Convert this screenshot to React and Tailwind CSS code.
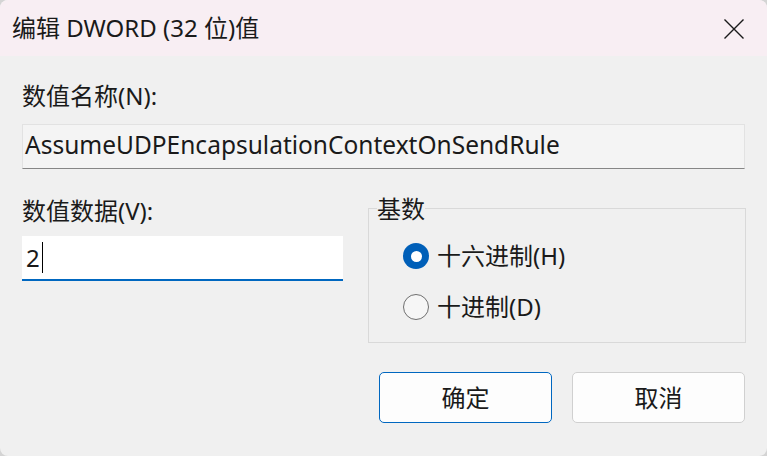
import React from 'react';

const font = { fontFamily: '"Noto Sans", "Noto Sans CJK SC", sans-serif' };

function Radio({ checked, label }) {
  return (
    <div className="flex items-center h-[34px]">
      {checked ? (
        <span className="w-[26px] h-[26px] rounded-full bg-[#005fb8] flex items-center justify-center">
          <span className="w-[11px] h-[11px] rounded-full bg-white" />
        </span>
      ) : (
        <span className="w-[26px] h-[26px] rounded-full border-[1.5px] border-[#6f6f6f] bg-[#f6f6f6]" />
      )}
      <span className="ml-[8px] text-[24px] text-[#1a1a1a]">{label}</span>
    </div>
  );
}

export default function App() {
  return (
    <div className="w-[767px] h-[456px] bg-[#d4d4d4]" style={font}>
      <div className="w-full h-full rounded-[8px] overflow-hidden bg-[#f0f0f0] flex flex-col">
        {/* Title bar */}
        <div className="h-[56px] shrink-0 bg-[#f8eef3] flex items-center justify-between pl-[12px] pr-[22px]">
          <span className="text-[24px] text-[#1a1a1a] leading-[32px]">编辑 DWORD (32 位)值</span>
          <svg width="22" height="22" viewBox="0 0 22 22" className="mt-[1px]">
            <path d="M1.5 1.5 L20.5 20.5 M20.5 1.5 L1.5 20.5" stroke="#1a1a1a" strokeWidth="1.4" fill="none" />
          </svg>
        </div>

        {/* Body */}
        <div className="flex-1 px-[22px] pt-[24px] text-[#1a1a1a]">
          <div className="text-[24px] leading-[32px]">数值名称(N):</div>
          <div className="mt-[12px] h-[45px] bg-[#f4f4f4] border border-[#e2e2e2] border-b-[#868686] flex items-center pl-[2px] pb-[4px]">
            <span className="text-[24.5px] leading-[32px]">AssumeUDPEncapsulationContextOnSendRule</span>
          </div>

          <div className="mt-[26px] grid grid-cols-[321px_378px] gap-x-[25px]">
            <div>
              <div className="text-[24px] leading-[32px]">数值数据(V):</div>
              <div className="mt-[9px] h-[45px] bg-white border-b-2 border-[#0067c0] flex items-center pl-[4px]">
                <span className="text-[24px] leading-[32px]">2</span>
                <span className="ml-[2px] w-px h-[31px] bg-black" />
              </div>
            </div>
            <fieldset className="h-[148px] border border-[#d9d9d9] px-[34px]">
              <legend className="ml-[-26px] text-[24px] leading-[27px]">基数</legend>
              <div className="pt-[17px] flex flex-col gap-[17px]">
                <Radio checked label="十六进制(H)" />
                <Radio label="十进制(D)" />
              </div>
            </fieldset>
          </div>

          <div className="mt-[29px] flex justify-end gap-[20px]">
            <button className="w-[173px] h-[51px] rounded-[5px] bg-[#fdfdfd] border border-[#0067c0] text-[24px] text-[#1a1a1a]">确定</button>
            <button className="w-[173px] h-[51px] rounded-[5px] bg-[#fdfdfd] border border-[#d0d0d0] text-[24px] text-[#1a1a1a]">取消</button>
          </div>
        </div>
      </div>
    </div>
  );
}
